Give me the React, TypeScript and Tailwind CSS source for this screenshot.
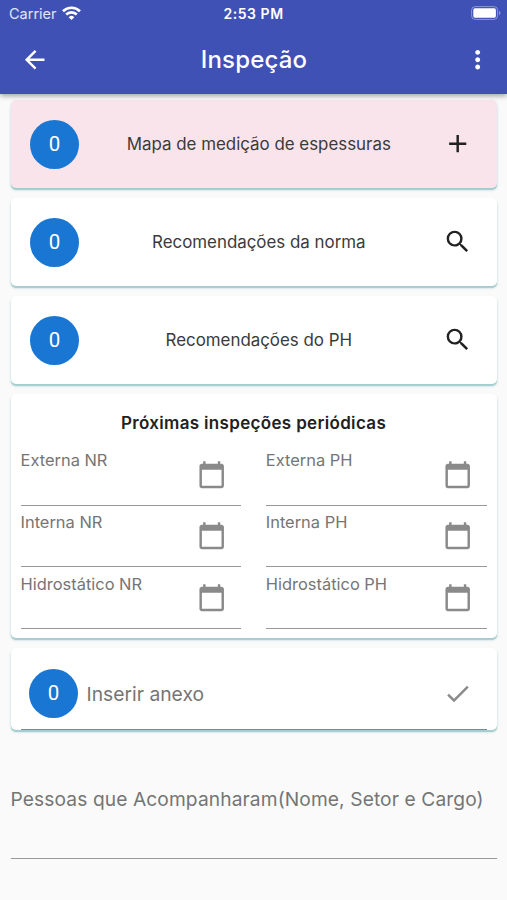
import React from 'react';
import { MdAdd, MdArrowBack, MdCalendarToday, MdCheck, MdMoreVert, MdSearch } from 'react-icons/md';

const CARD = 'rounded-[5px] shadow-[0_2px_1px_#a3cdcf,0_2px_3px_rgba(0,128,128,0.22)]';

const SUMMARY_CARDS = [
  { title: 'Mapa de medição de espessuras', count: 0, icon: <MdAdd size={29.4} />, bg: 'bg-[#fae4ec]' },
  { title: 'Recomendações da norma', count: 0, icon: <MdSearch size={29.4} />, bg: 'bg-white' },
  { title: 'Recomendações do PH', count: 0, icon: <MdSearch size={29.4} />, bg: 'bg-white' },
];

const DATE_FIELDS = ['Externa NR', 'Externa PH', 'Interna NR', 'Interna PH', 'Hidrostático NR', 'Hidrostático PH'];

function CountBadge({ count }: { count: number }) {
  return (
    <div className="w-[49px] h-[49px] rounded-full bg-[#1976d2] text-white font-['Roboto','Inter',sans-serif] text-[20.5px] flex items-center justify-center shrink-0">
      {count}
    </div>
  );
}

function StatusBar() {
  return (
    <div className="grid grid-cols-3 items-center h-[27px] pl-[8px] pr-[8px]">
      <div className="flex items-center gap-[5px] pl-px text-[14.5px] text-white/85">
        <span>Carrier</span>
        <svg className="-mt-[2px]" width="19" height="14" viewBox="0 0 19 14" fill="none" stroke="#fff" strokeWidth="2.7">
          <path d="M1 5.2a12.2 12.2 0 0 1 17 0" />
          <path d="M4.2 8.5a7.6 7.6 0 0 1 10.6 0" />
          <path d="M9.5 14 6.7 11.2a4 4 0 0 1 5.6 0z" fill="#fff" stroke="none" />
        </svg>
      </div>
      <span className="text-center text-[14px] font-semibold tracking-[0.55px] text-white whitespace-nowrap">2:53 PM</span>
      <svg className="justify-self-end -mr-[2px] -mt-px" width="30" height="14" viewBox="0 0 30 14">
        <rect x="0.6" y="0.6" width="26" height="12.8" rx="3.6" fill="none" stroke="#fff" strokeOpacity="0.4" />
        <rect x="2.3" y="2.3" width="22.6" height="9.4" rx="1.6" fill="#fff" />
        <path d="M28 4.8c2 .8 2 3.6 0 4.4z" fill="#fff" fillOpacity="0.4" />
      </svg>
    </div>
  );
}

function DateField({ label }: { label: string }) {
  return (
    <div className="h-[61.7px] border-b-[1.3px] border-[#999] flex justify-between pr-[14.5px]">
      <span className="text-[16.45px] leading-[20px] pt-[6.4px] text-[#757575] whitespace-nowrap">{label}</span>
      <MdCalendarToday size={29.4} className="text-[#8a8a8a] mt-[15.5px] shrink-0" />
    </div>
  );
}

export default function App() {
  return (
    <div className="w-full h-[900px] bg-[#fafafa] overflow-hidden font-['Inter','Liberation_Sans',sans-serif] text-[#3a3a3a]">
      <header className="h-[94px] bg-[#3f51b5] text-white shadow-[0_2px_5px_rgba(0,0,0,0.35)] relative">
        <StatusBar />
        <div className="h-[66px] flex items-center justify-between pl-[20px] pr-[15px]">
          <MdArrowBack size={29.4} />
          <h1 className="text-[24px] font-medium tracking-[0.2px] pr-[4px]">Inspeção</h1>
          <MdMoreVert size={29.4} />
        </div>
      </header>

      <main className="px-[10.5px] pt-[6px] flex flex-col gap-[10px]">
        {SUMMARY_CARDS.map((card) => (
          <section key={card.title} className={`${CARD} ${card.bg} h-[88px] flex items-center pl-[19.5px] pr-[24px]`}>
            <CountBadge count={card.count} />
            <p className="flex-1 text-center text-[16.9px] pr-[4.5px] pt-[2px]">{card.title}</p>
            <span className="text-[#212121] shrink-0">{card.icon}</span>
          </section>
        ))}

        <section className={`${CARD} bg-white h-[244px] px-[10px] pt-[17px]`}>
          <h2 className="text-center text-[17px] leading-[24px] font-semibold tracking-[0.33px] text-[#212121]">Próximas inspeções periódicas</h2>
          <div className="grid grid-cols-2 gap-x-[24.5px] pt-[9px]">
            {DATE_FIELDS.map((label) => (
              <DateField key={label} label={label} />
            ))}
          </div>
        </section>

        <section className={`${CARD} bg-white h-[82px] px-[10px]`}>
          <div className="h-full border-b-[1.3px] border-[#6f9092] flex items-center pl-[8.5px] pr-[14px] pt-[10px]">
            <CountBadge count={0} />
            <span className="flex-1 pl-[8.5px] pt-px text-[19.3px] text-[#757575]">Inserir anexo</span>
            <MdCheck size={29.4} className="text-[#8a8a8a]" />
          </div>
        </section>

        <div className="h-[117px] mt-[2px] border-b-[1.3px] border-[#999] pt-[45px]">
          <p className="text-[19.2px] leading-[24px] tracking-[0.1px] text-[#757575] whitespace-nowrap">
            Pessoas que Acompanharam(Nome, Setor e Cargo)
          </p>
        </div>
      </main>
    </div>
  );
}
